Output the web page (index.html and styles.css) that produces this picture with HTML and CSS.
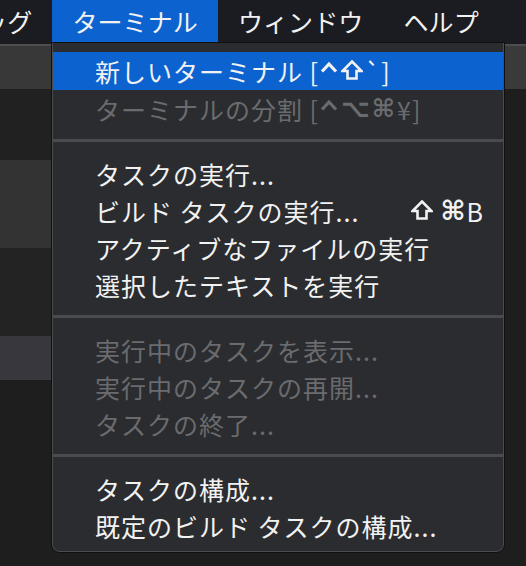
FILE: index.html
```html
<!DOCTYPE html>
<html>
<head>
  <title>ターミナル メニュー</title>
  <link rel="stylesheet" href="styles.css">
</head>
<body>
  <div class="menubar">
    <div class="menu-title first">デバッグ</div>
    <div class="menu-title active">ターミナル</div>
    <div class="menu-title">ウィンドウ</div>
    <div class="menu-title">ヘルプ</div>
  </div>
  <div class="workspace">
    <div class="side-left">
      <div class="tab-strip"></div>
      <div class="band dark"></div>
      <div class="band light"></div>
      <div class="band mid"></div>
      <div class="band selected"></div>
    </div>
    <div class="editor"></div>
    <div class="side-right">
      <div class="tab-strip"></div>
    </div>
  </div>
  <div class="dropdown">
    <div class="item highlighted">新しいターミナル [<svg class="sym caret" viewBox="0 0 18 20"><polyline points="2,11.5 9,4 16,11.5"/></svg><svg class="sym shift" viewBox="0 0 22 20"><path d="M11 1.5 L20.5 11 H15.5 V18.5 H6.5 V11 H1.5 Z"/></svg>`]</div>
    <div class="item disabled">ターミナルの分割 [<svg class="sym caret" viewBox="0 0 18 20"><polyline points="2,11.5 9,4 16,11.5"/></svg><span class="key">⌥⌘</span>¥]</div>
    <div class="separator"></div>
    <div class="item">タスクの実行...</div>
    <div class="item">ビルド タスクの実行...<span class="shortcut"><svg class="sym shift" viewBox="0 0 22 20"><path d="M11 1.5 L20.5 11 H15.5 V18.5 H6.5 V11 H1.5 Z"/></svg><span class="key">⌘</span>B</span></div>
    <div class="item">アクティブなファイルの実行</div>
    <div class="item">選択したテキストを実行</div>
    <div class="separator"></div>
    <div class="item disabled">実行中のタスクを表示...</div>
    <div class="item disabled">実行中のタスクの再開...</div>
    <div class="item disabled">タスクの終了...</div>
    <div class="separator"></div>
    <div class="item">タスクの構成...</div>
    <div class="item">既定のビルド タスクの構成...</div>
  </div>
</body>
</html>
```

FILE: styles.css
```css
body {
  margin: 0;
  width: 526px;
  height: 566px;
  overflow: hidden;
  background: #1e1e1e;
  font-family: "Noto Sans CJK JP", "DejaVu Sans", sans-serif;
  color: #f2f2f2;
}
.menubar {
  display: flex;
  height: 44px;
  background: #1b1c21;
  overflow: hidden;
  white-space: nowrap;
}
.menu-title {
  padding: 0 20px;
  height: 43px;
  line-height: 43px;
  font-size: 25px;
  letter-spacing: 0.1px;
}
.menu-title.first {
  margin-left: -88px;
}
.menu-title.active {
  background: #0c63cf;
}
.workspace {
  display: grid;
  grid-template-columns: 52px 1fr 22px;
  height: 522px;
}
.side-left, .side-right {
  display: flex;
  flex-direction: column;
}
.tab-strip {
  height: 43px;
  border-top: 2px solid #4e4e4e;
  background: #383838;
}
.band.dark {
  height: 71px;
  background: #212121;
}
.band.light {
  height: 88px;
  background: #333333;
}
.band.mid {
  height: 88px;
  background: #232323;
}
.band.selected {
  height: 44px;
  background: #37373d;
}
.editor {
  background: #1e1e1e;
}
.side-right .tab-strip {
  background: #3a3a3a;
}
.dropdown {
  position: absolute;
  left: 52px;
  top: 43px;
  width: 452px;
  box-sizing: border-box;
  padding: 9px 0 7px;
  background: #2b2c2f;
  border: 1px solid #4b4c50;
  border-top: none;
  border-radius: 0 0 8px 8px;
  box-shadow: 0 0 0 1px #101010;
}
.item {
  display: flex;
  align-items: center;
  height: 37px;
  padding: 0 20px 0 42px;
  font-size: 25px;
  letter-spacing: 1px;
  white-space: nowrap;
  color: #f2f2f2;
}
.item.highlighted {
  background: #0c63cf;
  height: 38px;
}
.item.disabled {
  color: #6a6b6e;
}
.sym {
  flex: none;
  fill: none;
  stroke: currentColor;
  stroke-linejoin: miter;
  margin-top: -2px;
}
.sym.caret {
  width: 18px;
  height: 20px;
  stroke-width: 3.2;
  margin-left: 1px;
  margin-right: 3px;
}
.sym.shift {
  width: 22px;
  height: 20px;
  stroke-width: 2.6;
  margin-right: 2px;
}
.key {
  font-family: "DejaVu Sans", sans-serif;
  font-weight: bold;
  letter-spacing: 2px;
}
.shortcut {
  display: flex;
  align-items: center;
  margin-left: auto;
  letter-spacing: 0;
}
.shortcut .key {
  font-size: 27px;
  letter-spacing: 0;
  margin-right: 1px;
}
.shortcut .sym.shift {
  margin-right: 8px;
}
.separator {
  height: 3px;
  margin: 12px 0 13px;
  background: #4a4b4e;
}
```
